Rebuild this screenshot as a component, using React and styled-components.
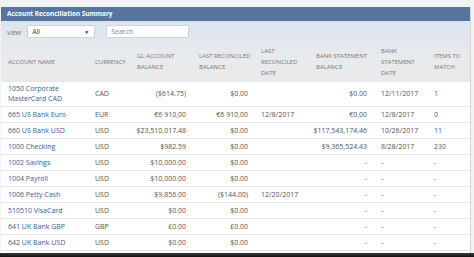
import React from 'react';
import styled, { createGlobalStyle } from 'styled-components';

const GlobalStyle = createGlobalStyle`
  html, body {
    margin: 0;
    padding: 0;
    background: #f3f3f3;
    font-family: "Open Sans", "Liberation Sans", sans-serif;
  }
`;

// styles
const Page = styled.div`
  width: 474px;
  height: 257px;
  overflow: hidden;
  display: flex;
  flex-direction: column;
  background: #f3f3f3;
`;

const Viewport = styled.div`
  flex: 1;
  overflow: hidden;
  padding: 7px 4px 0 1px;
`;

const Panel = styled.div`
  width: 469px;
  background: #fff;
  border-right: 1px solid #d6d6d6;
`;

const TitleBar = styled.div`
  height: 14px;
  background: #56769f;
  color: #fff;
  font-weight: 700;
  font-size: 6.4px;
  line-height: 14px;
  padding-left: 6px;
`;

const HeadArea = styled.div`
  background: linear-gradient(to bottom, #dbe4ee 0px, #e3e8ee 18px, #e9eaec 40px, #e9e9ea 60px);
`;

const FilterBar = styled.div`
  height: 21px;
  display: flex;
  align-items: center;
  padding-left: 6px;
  gap: 6px;
`;

const Label = styled.span`
  font-size: 6px;
  color: #666;
  margin-top: 3px;
`;

const SelectBox = styled.div`
  width: 68px;
  height: 13px;
  background: #fff;
  border: 1px solid #cfd4da;
  display: flex;
  align-items: center;
  justify-content: space-between;
  padding: 0 5px 0 4px;
  box-sizing: border-box;
  font-size: 7px;
  color: #444;
`;

const Arrow = styled.span`
  font-size: 5px;
  color: #333;
`;

const SearchBox = styled.div`
  width: 83px;
  height: 13px;
  margin-left: 5px;
  background: #fff;
  border: 1px solid #cfd4da;
  box-sizing: border-box;
  padding-left: 4px;
  font-size: 7px;
  line-height: 11px;
  color: #888;
`;

const Grid = styled.div`
  display: grid;
  grid-template-columns: 89px 42px 60px 63px 57px 63px 53px 42px;
`;

const HeadCell = styled.div`
  height: 40px;
  display: flex;
  align-items: center;
  padding-left: ${p => p.$pl}px;
  font-size: 6px;
  line-height: 11px;
  color: #777;
  text-transform: uppercase;
`;

const Cell = styled.div`
  height: ${p => (p.$tall ? 25 : 16)}px;
  display: flex;
  align-items: center;
  justify-content: ${p => (p.$right ? 'flex-end' : 'flex-start')};
  padding-left: ${p => (p.$right ? 0 : p.$pl)}px;
  padding-right: ${p => (p.$right ? p.$pr : 0)}px;
  border-bottom: 1px solid #e6e6e6;
  box-sizing: border-box;
  font-size: 7px;
  line-height: 10px;
  white-space: nowrap;
  color: ${p => (p.$link ? '#34609c' : '#555')};
`;

const BottomEdge = styled.div`
  height: 4px;
  background: linear-gradient(to bottom, #3a3a3a, #111);
`;

// data
const columns = [
  { title: 'Account name', pl: 7, link: true },
  { title: 'Currency', pl: 5 },
  { title: ['GL account', 'balance'], pl: 5, right: true, pr: 6 },
  { title: ['Last reconciled', 'balance'], pl: 7, right: true, pr: 7 },
  { title: ['Last', 'reconciled', 'date'], pl: 6 },
  { title: ['Bank statement', 'balance'], pl: 4, right: true, pr: 8 },
  { title: ['Bank', 'statement', 'date'], pl: 6 },
  { title: ['Items to', 'match'], pl: 6, link: true },
];

const rows = [
  [['1050 Corporate', 'MasterCard CAD'], 'CAD', '($614.75)', '$0.00', '', '$0.00', '12/11/2017', '1'],
  ['665 US Bank Euro', 'EUR', '€6 910,00', '€6 910,00', '12/8/2017', '€0,00', '12/8/2017', '0'],
  ['660 US Bank USD', 'USD', '$23,510,017.48', '$0.00', '', '$117,543,174.46', '10/26/2017', '11'],
  ['1000 Checking', 'USD', '$982.59', '$0.00', '', '$9,365,524.43', '8/28/2017', '230'],
  ['1002 Savings', 'USD', '$10,000.00', '$0.00', '', '-', '-', '-'],
  ['1004 Payroll', 'USD', '$10,000.00', '$0.00', '', '-', '-', '-'],
  ['1006 Petty Cash', 'USD', '$9,856.00', '($144.00)', '12/20/2017', '-', '-', '-'],
  ['510510 VisaCard', 'USD', '$0.00', '$0.00', '', '-', '-', '-'],
  ['641 UK Bank GBP', 'GBP', '£0.00', '£0.00', '', '-', '-', '-'],
  ['642 UK Bank USD', 'USD', '$0.00', '$0.00', '', '-', '-', '-'],
  ['643 UK Bank Euro', 'EUR', '€0,00', '€0,00', '', '-', '-', '-'],
];

const lines = (v) => (Array.isArray(v) ? v.map((l, i) => <div key={i}>{l}</div>) : v);

// components
const App = () => {
  return (
    <Page>
      <GlobalStyle />
      <Viewport>
        <Panel>
          <TitleBar>Account Reconciliation Summary</TitleBar>
          <HeadArea>
            <FilterBar>
              <Label>VIEW</Label>
              <SelectBox>
                <span>All</span>
                <Arrow>▼</Arrow>
              </SelectBox>
              <SearchBox>Search</SearchBox>
            </FilterBar>
            <Grid>
              {columns.map((c, i) => (
                <HeadCell key={i} $pl={c.pl}>
                  <div>{lines(c.title)}</div>
                </HeadCell>
              ))}
            </Grid>
          </HeadArea>
          <Grid>
            {rows.map((r, ri) =>
              r.map((v, ci) => {
                const c = columns[ci];
                const dash = v === '-';
                return (
                  <Cell
                    key={ri + '-' + ci}
                    $tall={ri === 0}
                    $pl={c.pl}
                    $pr={c.pr}
                    $right={c.right}
                    $link={c.link && !dash}
                  >
                    <div>{lines(v)}</div>
                  </Cell>
                );
              })
            )}
          </Grid>
        </Panel>
      </Viewport>
      <BottomEdge />
    </Page>
  );
};

export default App;
